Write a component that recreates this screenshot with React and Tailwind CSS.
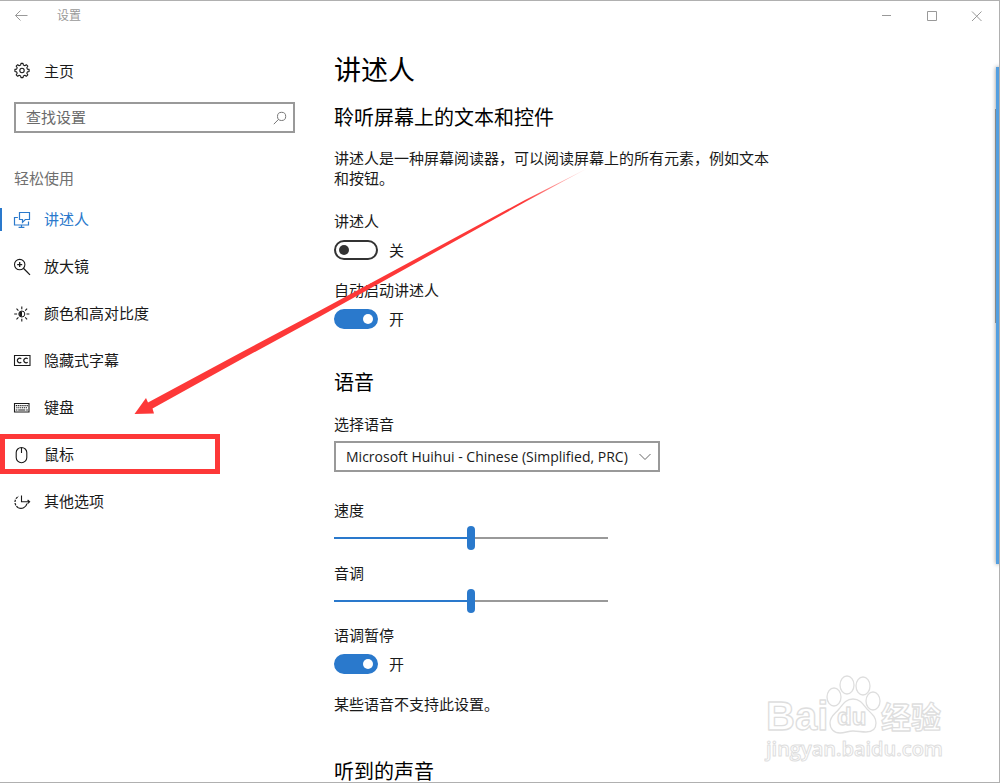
import { useState } from 'react';

/* Sidebar icons, all on a 18x18 grid */

function Icon({ children, className = '' }) {
  return (
    <svg
      viewBox="0 0 18 18"
      className={`size-[18px] shrink-0 ${className}`}
      fill="none"
      stroke="currentColor"
      strokeWidth="1.1"
      aria-hidden="true"
    >
      {children}
    </svg>
  );
}

const GearIcon = () => (
  <Icon>
    <path
      strokeLinejoin="round"
      d="M7.6 3.1 8 1.4h2l.4 1.7 1.4.6 1.5-1 1.5 1.5-1 1.5.6 1.4 1.7.3v2.1l-1.7.4-.6 1.4 1 1.5-1.5 1.5-1.5-1-1.4.6-.4 1.7H8l-.4-1.7-1.4-.6-1.5 1-1.5-1.5 1-1.5-.6-1.4-1.7-.4V7.4l1.7-.3.6-1.4-1-1.5 1.5-1.5 1.5 1z"
    />
    <circle cx="9" cy="8.5" r="2.2" />
  </Icon>
);

const NarratorIcon = () => (
  <Icon>
    <path d="M6.5 1.5h10v7h-4.200L9.500 11.300V8.500h-3z" strokeWidth="1.2" />
    <path d="M4.900 6.500H1.500v7.500h14v-3.400M8.500 14v2M5.600 16.300h5.800" strokeWidth="1.2" />
  </Icon>
);

const MagnifierIcon = () => (
  <Icon>
    <circle cx="6.7" cy="6.6" r="5.2" />
    <path d="M10.4 10.3 17 16.900M4.200 6.600h5M6.700 4.100v5" strokeWidth="1.3" />
  </Icon>
);

const ContrastIcon = () => (
  <Icon>
    <circle cx="8.8" cy="9" r="3" strokeWidth="1" />
    <path d="M9 6.200a2.800 2.800 0 0 0 0 5.600z" fill="currentColor" stroke="none" />
    <path d="M8.800 1.400v2.900M8.800 13.700v2.900M1.200 9h2.900M13.500 9h2.900M3.500 3.700l1.900 1.900M12.200 12.400l1.900 1.900M14.100 3.700l-1.900 1.900M5.400 12.400l-1.900 1.900" />
  </Icon>
);

const CaptionsIcon = () => (
  <Icon>
    <path d="M1.500 3.500h15.500v10H1.500z" />
    <path d="M8.300 6.700a2.500 2.200 0 1 0 0 3.600M14.700 6.700a2.500 2.200 0 1 0 0 3.600" strokeWidth="1.2" />
  </Icon>
);

const KeyboardIcon = () => (
  <Icon>
    <path d="M1.500 4.500h14.500v8.500H1.500z" />
    <path d="M2.800 6.600h12.200M3.300 8.700h11.400" strokeDasharray="1.2 .7" />
    <path d="M2.800 11h1.600M5.200 11h7.100M13.200 11h1.600" />
  </Icon>
);

const MouseIcon = () => (
  <Icon>
    <path d="M3.2 6.6a5.3 5.1 0 0 1 10.6 0v5a5.3 5.1 0 0 1-10.600 0zM8.500 1.600v5.500" />
  </Icon>
);

const OtherIcon = () => (
  <Icon>
    <path d="M14 10.600A6.200 6.200 0 0 1 5.300 14.700" strokeWidth="1.2" />
    <path d="M5.300 14.700A6.300 6.300 0 0 1 5.700 3.400" strokeDasharray="2.400 1" strokeWidth="1.2" />
    <path d="M8.500 2.500v6.300h7.500M14.600 7l2 1.800-2 1.800" />
  </Icon>
);

const NAV = [
  { label: '讲述人', icon: NarratorIcon, active: true },
  { label: '放大镜', icon: MagnifierIcon },
  { label: '颜色和高对比度', icon: ContrastIcon },
  { label: '隐藏式字幕', icon: CaptionsIcon },
  { label: '键盘', icon: KeyboardIcon },
  { label: '鼠标', icon: MouseIcon, marked: true },
  { label: '其他选项', icon: OtherIcon },
];

function TitleBar() {
  return (
    <header className="flex h-[30px] shrink-0 items-center text-[#999]">
      <button type="button" aria-label="返回" className="ml-[14px]">
        <svg viewBox="0 0 14 12" className="h-3 w-[14px]" fill="none" stroke="currentColor">
          <path d="M13.5 5.500H1.500M6.500 .500l-5 5 5 5" />
        </svg>
      </button>
      <span className="ml-[29px] text-xs">设置</span>
      <div className="mr-[17px] ml-auto flex gap-[34px]">
        <button type="button" aria-label="最小化">
          <svg viewBox="0 0 11 11" className="size-[11px]" fill="none" stroke="currentColor">
            <path d="M1 4.500h9" />
          </svg>
        </button>
        <button type="button" aria-label="最大化">
          <svg viewBox="0 0 11 11" className="size-[11px]" fill="none" stroke="currentColor">
            <path d="M1.500 .500h9v9h-9z" />
          </svg>
        </button>
        <button type="button" aria-label="关闭">
          <svg viewBox="0 0 11 11" className="size-[11px]" fill="none" stroke="currentColor">
            <path d="m1 .500 9.500 9.500M10.500 .500 1 10" />
          </svg>
        </button>
      </div>
    </header>
  );
}

function Sidebar() {
  return (
    <aside className="w-[310px] shrink-0 pt-5">
      <a href="#home" className="flex h-10 items-center gap-[13px] pl-[13px]">
        <GearIcon />
        主页
      </a>
      <div className="mt-[11px] mr-[15px] ml-[14px] flex h-[31px] items-center border-2 border-[#999]">
        <input
          type="search"
          aria-label="查找设置"
          placeholder="查找设置"
          className="min-w-0 flex-1 pl-[10px] outline-none placeholder:text-[#6a6a6a]"
        />
        <svg viewBox="0 0 14 14" className="mr-[6px] size-[14px] text-[#777]" fill="none" stroke="currentColor">
          <circle cx="8.6" cy="5.4" r="4.1" />
          <path d="M5.6 8.3.8 13.2" />
        </svg>
      </div>
      <h2 className="mt-[35px] pl-[14px] leading-5 text-[#707070]">轻松使用</h2>
      <nav className="mt-2">
        <ul>
          {NAV.map(({ label, icon: NavIcon, active, marked }) => (
            <li key={label} className="relative">
              <a
                href={`#${label}`}
                className={`flex h-[47px] items-center gap-[13px] pl-[13px] ${active ? 'text-[#2a79cc]' : ''}`}
              >
                <NavIcon />
                {label}
              </a>
              {active && <span className="absolute inset-y-3 left-0 w-0.5 bg-[#2a79cc]" />}
              {marked && (
                <span className="pointer-events-none absolute top-[3px] left-0 h-10 w-[220px] border-[5px] border-[#fd3838]" />
              )}
            </li>
          ))}
        </ul>
      </nav>
    </aside>
  );
}

function Toggle({ id, label, defaultOn = false, className = '' }) {
  const [on, setOn] = useState(defaultOn);
  return (
    <div className={className}>
      <label htmlFor={id} className="block leading-5">
        {label}
      </label>
      <div className="mt-[9px] flex h-5 items-center gap-[11px]">
        <input
          id={id}
          type="checkbox"
          role="switch"
          checked={on}
          onChange={(e) => setOn(e.target.checked)}
          className="flex h-5 w-[44px] appearance-none items-center rounded-full border-2 border-[#333] px-[3px] before:size-[10px] before:rounded-full before:bg-[#333] checked:justify-end checked:border-[#2a79cc] checked:bg-[#2a79cc] checked:before:bg-white"
        />
        <span>{on ? '开' : '关'}</span>
      </div>
    </div>
  );
}

function Slider({ id, label, className = '' }) {
  const [value, setValue] = useState(50);
  return (
    <div className={className}>
      <label htmlFor={id} className="block leading-5">
        {label}
      </label>
      <input
        id={id}
        type="range"
        value={value}
        onChange={(e) => setValue(Number(e.target.value))}
        style={{ '--fill': `${value}%` }}
        className="mt-[6px] block h-6 w-[274px] appearance-none bg-[linear-gradient(to_right,#2a79cc_var(--fill),#999_var(--fill))] bg-[length:100%_2px] bg-center bg-no-repeat [&::-webkit-slider-thumb]:h-6 [&::-webkit-slider-thumb]:w-2 [&::-webkit-slider-thumb]:appearance-none [&::-webkit-slider-thumb]:rounded-full [&::-webkit-slider-thumb]:bg-[#2a79cc]"
      />
    </div>
  );
}

function NarratorSettings() {
  return (
    <main className="min-w-0 flex-1 pt-[19px] pl-6">
      <h1 className="text-[27px] leading-10 text-black">讲述人</h1>
      <h2 className="mt-[14px] text-xl leading-7 text-black">聆听屏幕上的文本和控件</h2>
      <p className="mt-4 max-w-[440px] leading-5">
        讲述人是一种屏幕阅读器，可以阅读屏幕上的所有元素，例如文本和按钮。
      </p>
      <Toggle id="narrator" label="讲述人" className="mt-[23px]" />
      <Toggle id="autostart" label="自动启动讲述人" defaultOn className="mt-5" />

      <h2 className="mt-10 text-xl leading-7 text-black">语音</h2>
      <label htmlFor="voice" className="mt-[17px] block leading-5">
        选择语音
      </label>
      <div className="relative mt-[7px] w-[326px]">
        <select
          id="voice"
          className="block h-[31px] w-full appearance-none border-2 border-[#999] bg-white pl-[10px] text-sm"
        >
          <option>Microsoft Huihui - Chinese (Simplified, PRC)</option>
        </select>
        <svg
          viewBox="0 0 12 8"
          className="pointer-events-none absolute top-3 right-[9px] h-2 w-3 text-[#666]"
          fill="none"
          stroke="currentColor"
        >
          <path d="m.5 1 5.5 5.5L11.5 1" />
        </svg>
      </div>
      <Slider id="speed" label="速度" className="mt-7" />
      <Slider id="pitch" label="音调" className="mt-[13px]" />
      <Toggle id="pause" label="语调暂停" defaultOn className="mt-3" />
      <p className="mt-5 leading-5">某些语音不支持此设置。</p>

      <h2 className="mt-11 text-xl leading-7 text-black">听到的声音</h2>
    </main>
  );
}

/* Red pointer that tapers off towards its tail */
function Arrow() {
  return (
    <svg
      viewBox="0 0 460 250"
      className="pointer-events-none absolute top-[165px] left-[132px] h-[250px] w-[460px]"
      aria-hidden="true"
    >
      <defs>
        <linearGradient id="tail" gradientUnits="userSpaceOnUse" x1="390" y1="0" x2="458" y2="0">
          <stop offset="0" stopColor="#fd3838" />
          <stop offset="1" stopColor="#fd3838" stopOpacity="0.1" />
        </linearGradient>
      </defs>
      <path
        fill="url(#tail)"
        d="M2.5 248 14 232 16 236.500 108 187 188 144.500 393 34 456 2 394 35.500 188 150.500 108 194 20.500 242.500 22 247.500z"
      />
    </svg>
  );
}

function Watermark() {
  return (
    <svg
      viewBox="0 0 184 92"
      className="pointer-events-none absolute right-[51px] bottom-[18px] h-[92px] w-[184px]"
      fill="#fff"
      stroke="#dedede"
      strokeWidth="1.3"
      strokeLinejoin="round"
      role="img"
      aria-label="Baidu 经验"
    >
      <text x="2" y="58" fontSize="40" className="font-['Liberation_Sans'] font-bold">Bai</text>
      <ellipse cx="70" cy="25" rx="7" ry="9" />
      <ellipse cx="83" cy="13" rx="7" ry="9" />
      <ellipse cx="99" cy="14" rx="7" ry="9" />
      <ellipse cx="109" cy="29" rx="7" ry="9" />
      <path d="M89 27c7 0 10 5 14 10 5 5 9 8 9 14 0 6-4 9-10 9-5 0-8-1-13-1s-8 2-13 2c-6 0-10-4-10-10 0-7 5-9 9-14 4-5 7-10 14-10z" />
      <text x="73" y="53" fontSize="24" className="font-['Liberation_Sans'] font-bold">du</text>
      <text x="117" y="56" fontSize="30" className="font-['Noto_Sans_CJK_SC'] font-bold">经验</text>
      <text x="2" y="84" fontSize="20" strokeWidth="1" className="font-['Open_Sans'] font-semibold">jingyan.baidu.com</text>
    </svg>
  );
}

export default function App() {
  return (
    <div className="relative flex h-screen flex-col overflow-hidden border-t border-r border-b border-[#b0b0b0] bg-white font-['Open_Sans','Noto_Sans_CJK_SC',sans-serif] text-[15px] text-[#1a1a1a]">
      <TitleBar />
      <div className="flex min-h-0 flex-1">
        <Sidebar />
        <NarratorSettings />
      </div>
      <Arrow />
      <Watermark />
      {/* edge of the window behind */}
      <div className="absolute top-[66px] -right-px h-[497px] w-1 bg-[#539fe0] shadow-[0_0_4px_rgba(0,0,0,0.45)]">
        <div className="absolute top-[42px] right-full h-[214px] w-px bg-[#888]" />
      </div>
    </div>
  );
}
